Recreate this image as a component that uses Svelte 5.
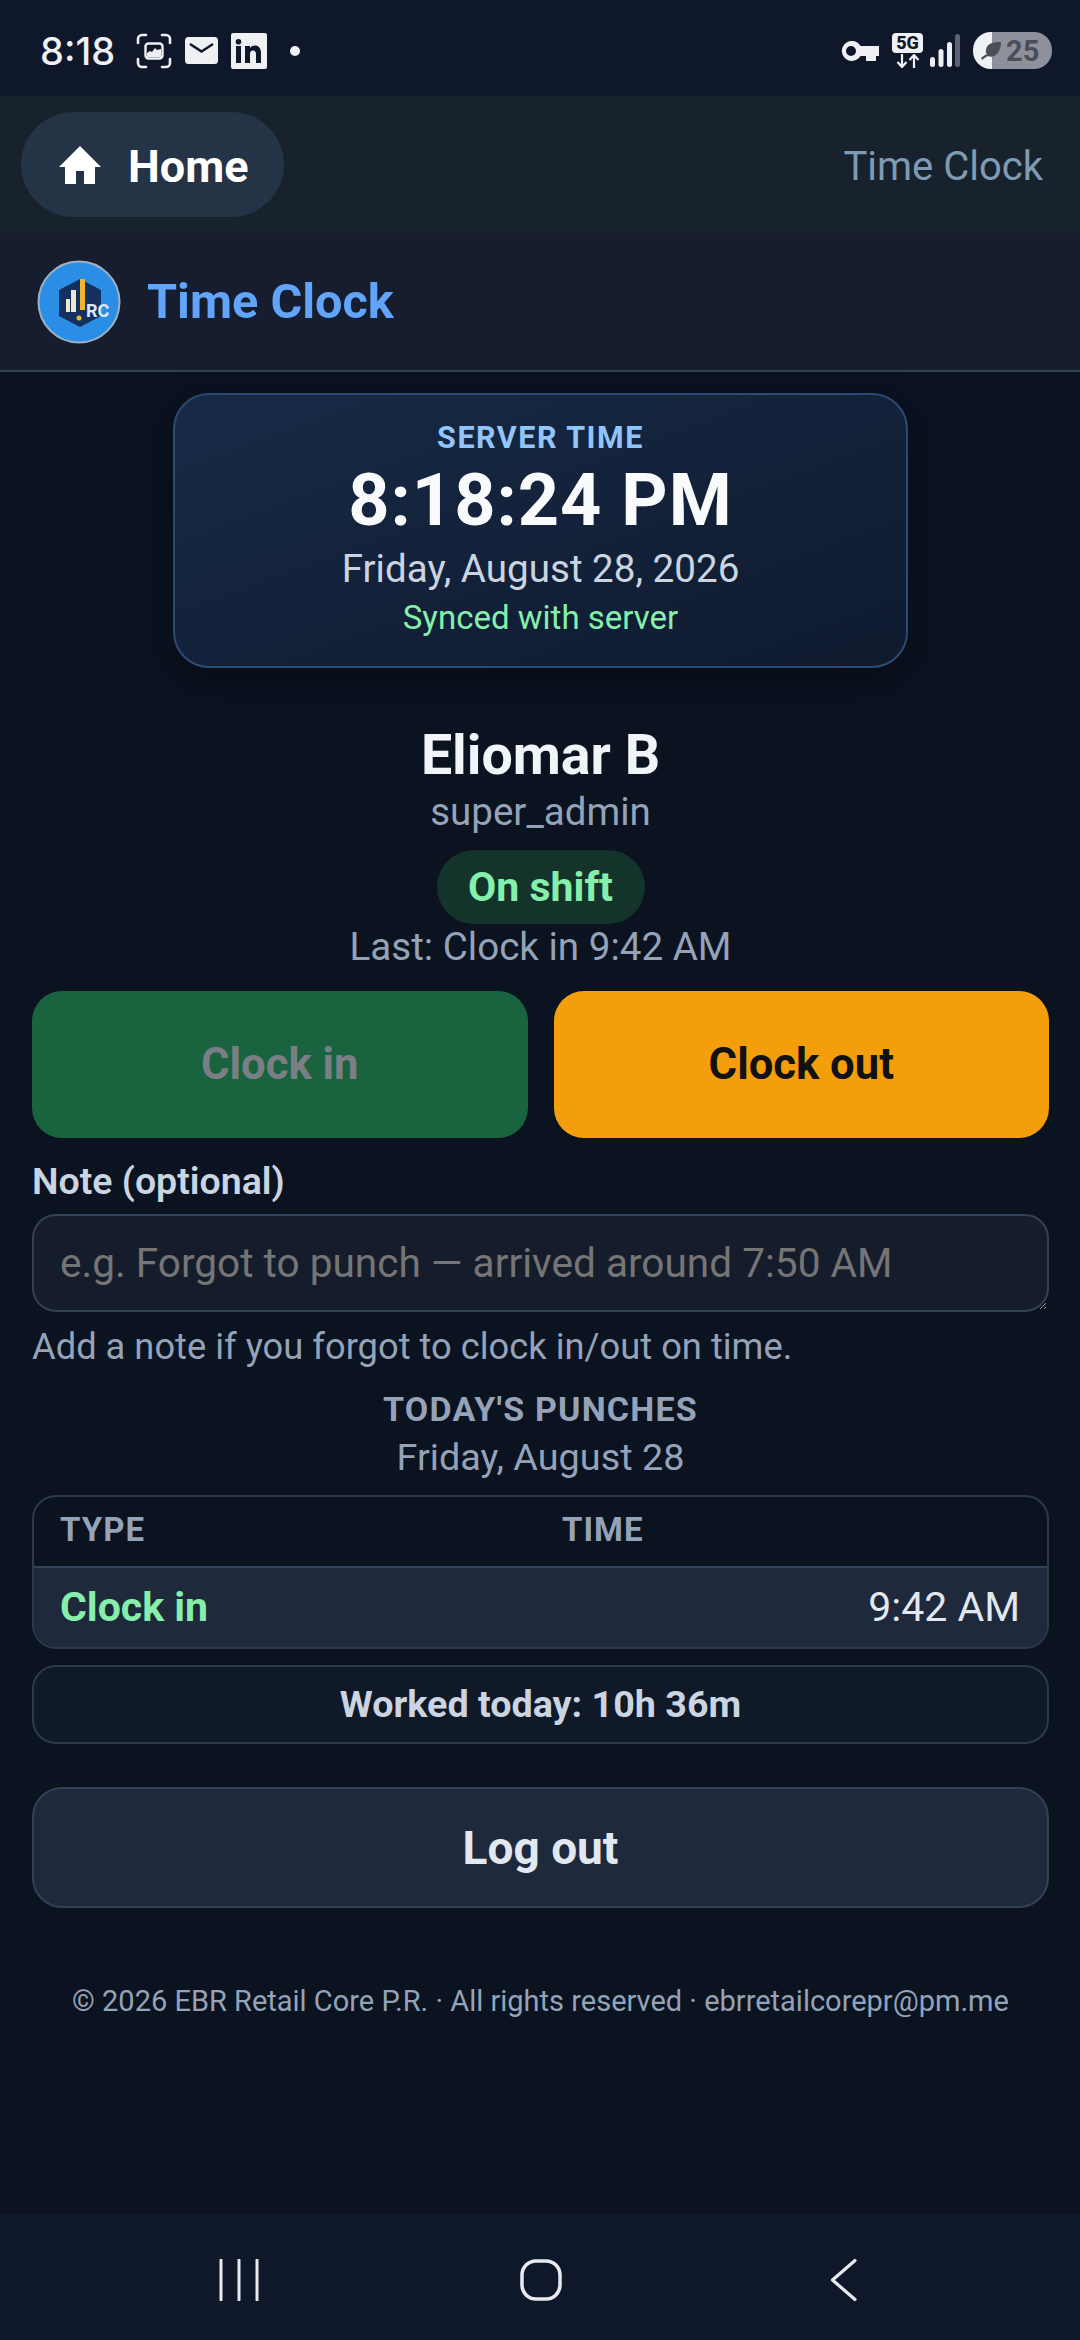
<script>
  const punches = [{ type: 'Clock in', time: '9:42 AM' }];
</script>

<div class="phone">
  <div class="status">
    <div class="side">
      <span class="clock">8:18</span>
      <svg class="ic-shot" viewBox="0 0 36 36" width="36" height="36">
        <path d="M2 10V6a4 4 0 0 1 4-4h4M26 2h4a4 4 0 0 1 4 4v4M34 26v4a4 4 0 0 1-4 4h-4M10 34H6a4 4 0 0 1-4-4v-4" fill="none" stroke="#eef0f3" stroke-width="2.600" stroke-linecap="round"/>
        <rect x="9.500" y="10.500" width="17" height="15" rx="3" fill="none" stroke="#eef0f3" stroke-width="2.400"/>
        <path d="M11 24v-4l3-2 2 1 3-4 2 2 4-1v8z" fill="#eef0f3"/>
      </svg>
      <svg class="ic-mail" viewBox="0 0 33 27" width="33" height="27">
        <rect width="33" height="27" rx="3.500" fill="#eef0f3"/>
        <path d="M5 7l11.500 7.500L28 7" fill="none" stroke="#0f172a" stroke-width="2.600"/>
      </svg>
      <svg class="ic-in" viewBox="0 0 36 36" width="36" height="36">
        <path fill-rule="evenodd" d="M2 0h32a2 2 0 0 1 2 2v32a2 2 0 0 1-2 2H2a2 2 0 0 1-2-2V2a2 2 0 0 1 2-2zm3 13v17h5V13zm2.500-7a2.800 2.800 0 1 0 0 5.600 2.800 2.800 0 0 0 0-5.600zM14 13v17h5v-9c0-2 1-3.500 3-3.500s3 1.500 3 3.500v9h5V20c0-5-2.500-7.500-6-7.500-2.500 0-4 1-5 2.500v-2z" fill="#eef0f3"/>
      </svg>
      <span class="dot"></span>
    </div>
    <div class="side right">
      <svg class="ic-key" viewBox="0 0 38 20" width="38" height="20">
        <path fill-rule="evenodd" d="M10 0a10 10 0 0 1 9.500 5H38v10h-3v5H25v-5h-5.500A10 10 0 1 1 10 0zm0 5a5 5 0 1 0 0 10 5 5 0 0 0 0-10z" fill="#eef0f3"/>
      </svg>
      <div class="net">
        <span class="fiveg">5G</span>
        <svg viewBox="0 0 24 14" width="24" height="14">
          <path d="M6 0v12M1.500 8L6 13l4.500-5M18 14V2M13.500 6L18 1l4.500 5" fill="none" stroke="#eef0f3" stroke-width="2.200"/>
        </svg>
      </div>
      <svg class="ic-sig" viewBox="0 0 30 33" width="30" height="33">
        <rect x="0" y="23" width="5" height="10" rx="2.500" fill="#eef0f3"/>
        <rect x="8.500" y="15" width="5" height="18" rx="2.500" fill="#eef0f3"/>
        <rect x="17" y="8" width="5" height="25" rx="2.500" fill="#eef0f3"/>
        <rect x="25" y="0" width="5" height="33" rx="2.500" fill="#5b6272"/>
      </svg>
      <div class="batt">
        <svg viewBox="0 0 20 18" width="20" height="18">
          <path d="M20 0c-8 0-14 1-15 8-.3 2 0 3 1 4-2 1-4 2-6 4l1 2c2-2 4-3 6-4 2 1 4 1 6 0 5-2 7-8 7-14z" fill="#4b4e56"/>
        </svg>
        <span>25</span>
      </div>
    </div>
  </div>

  <nav class="topnav">
    <div class="home-pill">
      <svg viewBox="0 0 42 38" width="42" height="38">
        <path d="M21 0l21 21h-6v17H25V25h-8v13H6V21H0z" fill="#fff"/>
      </svg>
      <span>Home</span>
    </div>
    <span class="crumb">Time Clock</span>
  </nav>

  <header class="head">
    <svg class="logo" viewBox="0 0 84 84" width="84" height="84">
      <circle cx="42" cy="42" r="40.500" fill="#2b8ee6" stroke="#9fb2c4" stroke-width="2"/>
      <path d="M43 19l21 11v26L43 67 22 56V30z" fill="#14305f"/>
      <rect x="29" y="39" width="4" height="13" fill="#efe9cc"/>
      <rect x="34" y="30" width="5" height="22" fill="#efe9cc"/>
      <rect x="43" y="19" width="5" height="31" fill="#efb52e"/>
      <circle cx="42" cy="58" r="2.500" fill="#efb52e"/>
      <text x="49" y="57" class="logo-rc">RC</text>
    </svg>
    <h1>Time Clock</h1>
  </header>

  <main class="content">
    <section class="server">
      <div class="server-label">SERVER TIME</div>
      <div class="server-time">8:18:24 PM</div>
      <div class="server-date">Friday, August 28, 2026</div>
      <div class="server-sync">Synced with server</div>
    </section>

    <section class="who">
      <div class="name">Eliomar B</div>
      <div class="role">super_admin</div>
      <div class="badge">On shift</div>
      <div class="last">Last: Clock in 9:42 AM</div>
    </section>

    <div class="actions">
      <button class="btn in" disabled>Clock in</button>
      <button class="btn out">Clock out</button>
    </div>

    <label class="note-label" for="note">Note (optional)</label>
    <textarea id="note" rows="1" placeholder="e.g. Forgot to punch — arrived around 7:50 AM"></textarea>
    <p class="hint">Add a note if you forgot to clock in/out on time.</p>

    <div class="today-title">TODAY'S PUNCHES</div>
    <div class="today-date">Friday, August 28</div>

    <div class="table">
      <div class="row th">
        <span>TYPE</span>
        <span>TIME</span>
      </div>
      {#each punches as p}
        <div class="row td">
          <span class="type">{p.type}</span>
          <span class="time">{p.time}</span>
        </div>
      {/each}
    </div>

    <div class="worked">Worked today: 10h 36m</div>
    <button class="logout">Log out</button>
    <footer class="foot">© 2026 EBR Retail Core P.R. · All rights reserved · ebrretailcorepr@pm.me</footer>
  </main>

  <div class="sysnav">
    <svg viewBox="0 0 40 42" width="40" height="42">
      <path d="M2 1v40M20 1v40M38 1v40" stroke="#e8eaee" stroke-width="3" stroke-linecap="round" fill="none"/>
    </svg>
    <svg viewBox="0 0 42 42" width="42" height="42">
      <rect x="2" y="2" width="38" height="38" rx="14" stroke="#e8eaee" stroke-width="3.500" fill="none"/>
    </svg>
    <svg viewBox="0 0 27 42" width="27" height="42">
      <path d="M25 1.500L2.500 21 25 40.500" stroke="#e8eaee" stroke-width="3.200" stroke-linecap="round" stroke-linejoin="round" fill="none"/>
    </svg>
  </div>
</div>

<style>
  :global(body) {
    margin: 0;
    background: #0b1220;
  }

  .phone {
    width: 1080px;
    height: 2340px;
    display: flex;
    flex-direction: column;
    background: #0b1220;
    font-family: Roboto, "Liberation Sans", sans-serif;
    color: #f1f5f9;
    overflow: hidden;
  }

  .status {
    height: 96px;
    box-sizing: border-box;
    flex: none;
    padding: 5px 28px 0 40px;
    display: flex;
    align-items: center;
    justify-content: space-between;
    background: #0f172a;
  }

  .side {
    display: flex;
    align-items: center;
  }

  .clock {
    font-family: Inter, Roboto, sans-serif;
    font-size: 38px;
    font-weight: 500;
    color: #eef0f3;
    margin-right: 21px;
  }

  .ic-mail { margin: 0 13px 0 13px; }
  .dot {
    width: 10px;
    height: 10px;
    border-radius: 50%;
    background: #eef0f3;
    margin-left: 23px;
  }

  .ic-key { margin-right: 13px; }

  .net {
    display: flex;
    flex-direction: column;
    align-items: center;
    gap: 1px;
    margin-right: 7px;
  }

  .fiveg {
    background: #eef0f3;
    color: #0f172a;
    border-radius: 4px;
    font-size: 18px;
    line-height: 20px;
    font-weight: 800;
    width: 31px;
    text-align: center;
  }

  .ic-sig { margin-right: 13px; }

  .batt {
    width: 79px;
    height: 37px;
    box-sizing: border-box;
    border-radius: 18px;
    background: linear-gradient(90deg, #eef0f3 0 19px, #8e919c 19px);
    display: flex;
    align-items: center;
    padding-left: 8px;
    gap: 5px;
    color: #4b4e56;
    font-size: 29px;
    font-weight: 700;
  }

  .topnav {
    height: 137px;
    flex: none;
    box-sizing: border-box;
    padding: 0 37px 0 21px;
    display: flex;
    align-items: center;
    justify-content: space-between;
    background: #18222c;
  }

  .home-pill {
    width: 263px;
    height: 105px;
    box-sizing: border-box;
    padding-left: 38px;
    border-radius: 53px;
    background: #243446;
    display: flex;
    align-items: center;
    gap: 27px;
    font-size: 45px;
    font-weight: 700;
    color: #fff;
  }

  .home-pill span {
    padding-top: 3px;
  }

  .crumb {
    padding-top: 3px;
    font-size: 40px;
    color: #7f9ab3;
  }

  .head {
    height: 139px;
    flex: none;
    box-sizing: border-box;
    padding: 0 36px 0 37px;
    display: flex;
    align-items: center;
    gap: 26px;
    background: #151d2e;
    border-bottom: 2px solid #334155;
  }

  .logo-rc {
    font-family: Roboto, sans-serif;
    font-size: 18px;
    font-weight: 700;
    fill: #dbe9f6;
  }

  h1 {
    margin: 0;
    font-size: 48.6px;
    font-weight: 700;
    color: #60a5fa;
  }

  .content {
    flex: 1;
    display: flex;
    flex-direction: column;
    padding: 21px 31px 0 32px;
  }

  .server {
    align-self: center;
    width: 735px;
    height: 275px;
    box-sizing: border-box;
    border: 2px solid #2d4a75;
    border-radius: 36px;
    background: linear-gradient(160deg, #172a46, #0f1a2e);
    box-shadow: 0 10px 36px rgba(0, 0, 0, 0.35);
    padding-top: 25px;
    text-align: center;
  }

  .server-label {
    font-size: 30.5px;
    line-height: 36px;
    font-weight: 700;
    letter-spacing: 1.5px;
    color: #93c5fd;
  }

  .server-time {
    font-size: 72px;
    line-height: 84px;
    font-weight: 700;
    letter-spacing: 1px;
    margin-top: 3px;
    color: #f8fafc;
  }

  .server-date {
    font-size: 38.6px;
    line-height: 48px;
    margin-top: 2px;
    color: #cbd5e1;
  }

  .server-sync {
    font-size: 33px;
    line-height: 48px;
    margin-top: 1px;
    color: #86efac;
  }

  .who {
    display: flex;
    flex-direction: column;
    align-items: center;
    margin-top: 56px;
  }

  .name {
    font-size: 55.5px;
    line-height: 64px;
    font-weight: 700;
    color: #f1f5f9;
  }

  .role {
    font-size: 38.5px;
    line-height: 48px;
    color: #94a3b8;
  }

  .badge {
    width: 208px;
    height: 74px;
    margin-top: 14px;
    border-radius: 37px;
    background: #14332b;
    color: #86efac;
    font-size: 41px;
    font-weight: 700;
    display: flex;
    align-items: center;
    justify-content: center;
  }

  .last {
    font-size: 38.6px;
    line-height: 46px;
    color: #94a3b8;
  }

  .actions {
    display: grid;
    grid-template-columns: 1fr 1fr;
    gap: 26px;
    margin-top: 21px;
  }

  .btn {
    height: 147px;
    border: none;
    border-radius: 30px;
    font-family: inherit;
    font-size: 43.6px;
    font-weight: 700;
  }

  .btn.in {
    background: #1a633f;
    color: #7a7f85;
  }

  .btn.out {
    background: #f59e0b;
    color: #111;
  }

  .note-label {
    margin-top: 22px;
    font-size: 37.500px;
    line-height: 42px;
    font-weight: 600;
    color: #cbd5e1;
  }

  textarea {
    display: block;
    margin-top: 12px;
    height: 98px;
    box-sizing: border-box;
    padding: 22px 26px;
    font-family: inherit;
    font-size: 40.6px;
    line-height: 50px;
    color: #f1f5f9;
    background: #151d2c;
    border: 2px solid #334155;
    border-radius: 24px;
    outline: none;
  }

  .hint {
    margin: 13px 0 0;
    font-size: 36.3px;
    line-height: 44px;
    color: #94a3b8;
  }

  .today-title {
    margin-top: 19px;
    text-align: center;
    font-size: 34px;
    line-height: 42px;
    font-weight: 700;
    letter-spacing: 1.2px;
    color: #94a3b8;
  }

  .today-date {
    margin-top: 4px;
    text-align: center;
    font-size: 37.8px;
    line-height: 46px;
    color: #94a3b8;
  }

  .table {
    margin-top: 15px;
    border: 2px solid #2c3a4e;
    border-radius: 24px;
    overflow: hidden;
  }

  .row {
    display: flex;
    align-items: center;
    padding: 0 27px 0 26px;
  }

  .th {
    height: 71px;
    box-sizing: border-box;
    padding-bottom: 5px;
    border-bottom: 2px solid #334155;
    font-size: 33px;
    font-weight: 700;
    letter-spacing: 1px;
    color: #94a3b8;
  }

  .th span:first-child {
    width: 502px;
  }

  .td {
    height: 79px;
    box-sizing: border-box;
    padding-bottom: 2px;
    justify-content: space-between;
    background: #1e293b;
    font-size: 41px;
  }

  .type {
    color: #86efac;
    font-weight: 700;
  }

  .time {
    color: #e2e8f0;
  }

  .worked {
    margin-top: 16px;
    height: 79px;
    box-sizing: border-box;
    padding-bottom: 2px;
    border: 2px solid #2c3a4e;
    border-radius: 24px;
    background: #0f1928;
    display: flex;
    align-items: center;
    justify-content: center;
    font-size: 37.7px;
    font-weight: 700;
    color: #cbd5e1;
  }

  .logout {
    margin-top: 43px;
    height: 121px;
    border: 2px solid #334155;
    border-radius: 30px;
    background: #1e293b;
    font-family: inherit;
    font-size: 46px;
    font-weight: 700;
    color: #e2e8f0;
  }

  .foot {
    margin-top: 74px;
    text-align: center;
    font-size: 29px;
    line-height: 38px;
    color: #94a3b8;
  }

  .sysnav {
    height: 126px;
    flex: none;
    box-sizing: border-box;
    padding-top: 6px;
    background: #0f172a;
    display: grid;
    grid-template-columns: 219px 40px 261px 42px 268px 27px;
    align-items: center;
  }

  .sysnav svg:nth-child(1) { grid-column: 2; }
  .sysnav svg:nth-child(2) { grid-column: 4; }
  .sysnav svg:nth-child(3) { grid-column: 6; }
</style>
